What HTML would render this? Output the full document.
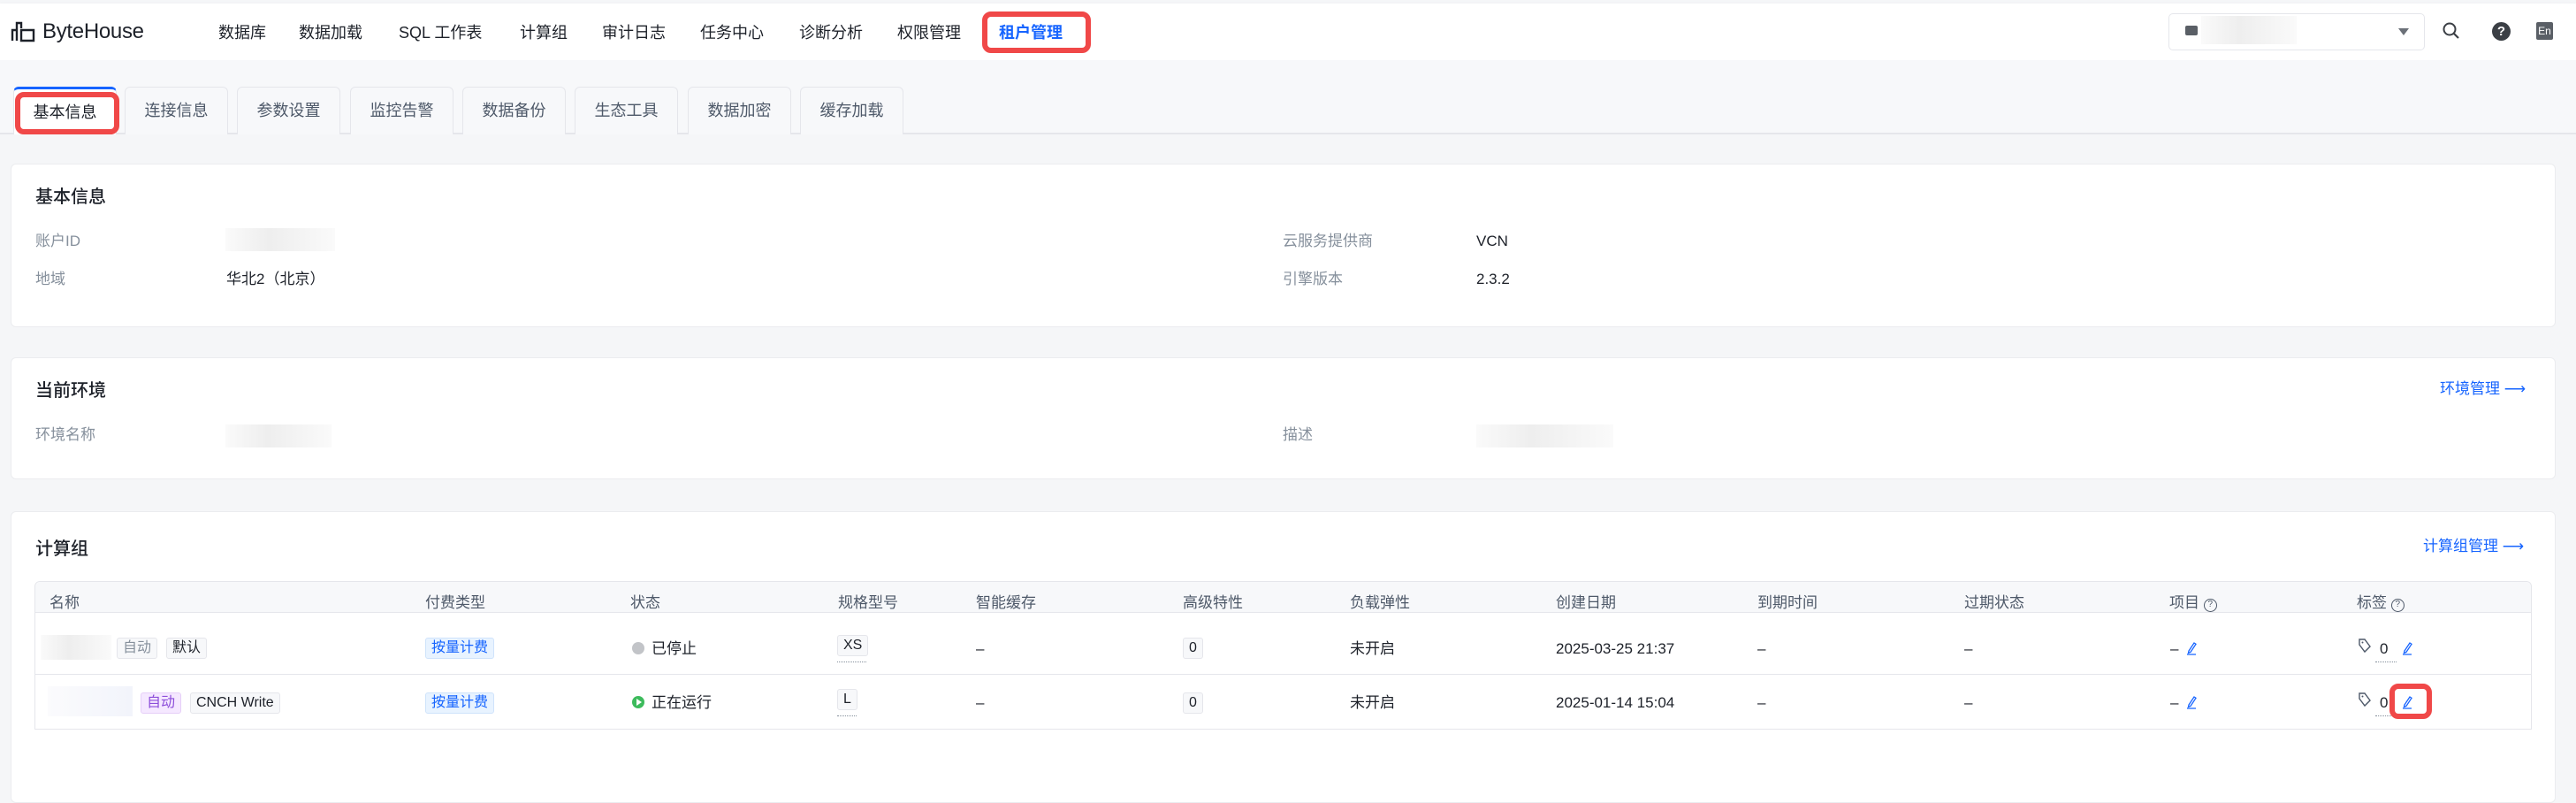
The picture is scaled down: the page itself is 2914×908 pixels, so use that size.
<!DOCTYPE html>
<html><head><meta charset="utf-8"><style>
*{margin:0;padding:0;box-sizing:border-box}
body{width:2914px;height:888px;overflow:hidden;background:#f5f6f8;font-family:"Liberation Sans","Noto Sans CJK SC",sans-serif;color:#1d2129;font-size:17px;position:relative;line-height:1.15}
.a{position:absolute;white-space:nowrap}
.nav{position:absolute;left:0;top:4px;width:2914px;height:64px;background:#fff;box-shadow:0 2px 6px rgba(0,0,0,.06)}
.ni{position:absolute;top:27px;font-size:18px;color:#1d2129}
.tabbar{position:absolute;left:0;top:68px;width:2914px;height:84px;background:#f7f8fa;border-bottom:2px solid #e5e6eb}
.tab{position:absolute;top:98px;height:54px;width:117px;border:1px solid #e5e6eb;border-bottom:none;border-radius:6px 6px 0 0;background:#f7f8fa;text-align:center;line-height:52px;font-size:18px;color:#4e5969}
.card{position:absolute;left:12px;width:2879px;background:#fff;border:1px solid #ebecef;border-radius:6px}
.ttl{font-size:20px;color:#1d2129;font-weight:500}
.lb{color:#86909c;font-size:17px}
.blur{position:absolute;background:linear-gradient(90deg,#fafafa,#eeeeee 40%,#fafafa)}
.rb{position:absolute;border:6px solid #f04848;border-radius:10px}
.th{position:absolute;top:672px;color:#4e5969;font-size:17px}
.tag{position:absolute;height:24px;line-height:22px;padding:0 6px;border:1px solid #e5e6eb;border-radius:3px;background:#f7f8fa;font-size:16px}
.link{color:#1664ff}
.pen{position:absolute;width:12px;height:18px}
</style></head><body>
<div class="nav"></div>
<svg class="a" style="left:12px;top:22px" width="30" height="26" viewBox="0 0 30 26"><path d="M2 24V12h5M7 24V4h5v6M12 24h14V12H12z" fill="none" stroke="#1d2129" stroke-width="2.4"/></svg>
<div class="a" style="left:48px;top:22px;font-size:24px;color:#1d2129;letter-spacing:-0.3px">ByteHouse</div>
<div class="ni" style="left:247px">数据库</div>
<div class="ni" style="left:338px">数据加载</div>
<div class="ni" style="left:451px">SQL 工作表</div>
<div class="ni" style="left:588px">计算组</div>
<div class="ni" style="left:681px">审计日志</div>
<div class="ni" style="left:792px">任务中心</div>
<div class="ni" style="left:904px">诊断分析</div>
<div class="ni" style="left:1015px">权限管理</div>
<div class="ni" style="left:1130px;color:#1664ff;font-weight:bold">租户管理</div>
<div class="rb" style="left:1111px;top:13px;width:123px;height:47px"></div>
<div class="a" style="left:2453px;top:15px;width:290px;height:42px;border:1px solid #e5e6eb;border-radius:5px;background:#fff"></div>
<div class="a" style="left:2472px;top:29px;width:14px;height:11px;background:#5a5f66;border-radius:2px"></div>
<div class="blur" style="left:2490px;top:18px;width:108px;height:32px"></div>
<svg class="a" style="left:2712px;top:31px" width="14" height="10"><path d="M1 1h12L7 9z" fill="#6b7078"/></svg>
<svg class="a" style="left:2762px;top:24px" width="22" height="22" viewBox="0 0 22 22"><circle cx="9" cy="9" r="6.5" fill="none" stroke="#3b3f45" stroke-width="2"/><path d="M14 14l5 5" stroke="#3b3f45" stroke-width="2.2"/></svg>
<div class="a" style="left:2819px;top:25px;width:21px;height:21px;border-radius:50%;background:#3b3f45;color:#fff;font-size:15px;font-weight:bold;text-align:center;line-height:21px">?</div>
<div class="a" style="left:2869px;top:25px;width:19px;height:20px;border-radius:2px;background:#5a5f66;color:#fff;font-size:12px;text-align:center;line-height:20px">En</div>

<div class="tabbar"></div>
<div class="tab" style="left:15px;background:#fff;color:#1d2129;border-top:3px solid #1664ff">基本信息</div>
<div class="tab" style="left:141px">连接信息</div>
<div class="tab" style="left:268px">参数设置</div>
<div class="tab" style="left:396px">监控告警</div>
<div class="tab" style="left:523px">数据备份</div>
<div class="tab" style="left:650px">生态工具</div>
<div class="tab" style="left:778px">数据加密</div>
<div class="tab" style="left:905px">缓存加载</div>
<div class="rb" style="left:17px;top:104px;width:118px;height:48px"></div>

<div class="card" style="top:185px;height:185px"></div>
<div class="a ttl" style="left:40px;top:212px">基本信息</div>
<div class="a lb" style="left:40px;top:263px">账户ID</div>
<div class="blur" style="left:255px;top:258px;width:124px;height:26px"></div>
<div class="a lb" style="left:40px;top:306px">地域</div>
<div class="a" style="left:256px;top:306px">华北2（北京）</div>
<div class="a lb" style="left:1451px;top:263px">云服务提供商</div>
<div class="a" style="left:1670px;top:263px">VCN</div>
<div class="a lb" style="left:1451px;top:306px">引擎版本</div>
<div class="a" style="left:1670px;top:306px">2.3.2</div>

<div class="card" style="top:404px;height:138px"></div>
<div class="a ttl" style="left:40px;top:431px">当前环境</div>
<div class="a lb" style="left:40px;top:482px">环境名称</div>
<div class="blur" style="left:255px;top:480px;width:120px;height:26px"></div>
<div class="a lb" style="left:1451px;top:482px">描述</div>
<div class="blur" style="left:1670px;top:480px;width:155px;height:26px"></div>
<div class="a link" style="left:2760px;top:430px">环境管理 ⟶</div>

<div class="card" style="top:578px;height:330px"></div>
<div class="a ttl" style="left:40px;top:610px">计算组</div>
<div class="a link" style="left:2741px;top:608px">计算组管理 ⟶</div>
<div class="a" style="left:39px;top:657px;width:2825px;height:168px;border:1px solid #e5e6eb;border-radius:6px 6px 0 0"></div>
<div class="a" style="left:40px;top:658px;width:2823px;height:35px;background:#f7f8fa;border-bottom:1px solid #e5e6eb;border-radius:6px 6px 0 0"></div>
<div class="a" style="left:40px;top:762px;width:2823px;height:1px;background:#e5e6eb"></div>
<div class="th" style="left:56px">名称</div>
<div class="th" style="left:481px">付费类型</div>
<div class="th" style="left:713px">状态</div>
<div class="th" style="left:948px">规格型号</div>
<div class="th" style="left:1104px">智能缓存</div>
<div class="th" style="left:1338px">高级特性</div>
<div class="th" style="left:1527px">负载弹性</div>
<div class="th" style="left:1760px">创建日期</div>
<div class="th" style="left:1988px">到期时间</div>
<div class="th" style="left:2222px">过期状态</div>
<div class="th" style="left:2454px">项目 <span style="display:inline-block;width:15px;height:15px;border:1.5px solid #4e5969;border-radius:50%;font-size:10px;line-height:12px;text-align:center;vertical-align:1px">?</span></div>
<div class="th" style="left:2666px">标签 <span style="display:inline-block;width:15px;height:15px;border:1.5px solid #4e5969;border-radius:50%;font-size:10px;line-height:12px;text-align:center;vertical-align:1px">?</span></div>

<!-- row1 -->
<div class="blur" style="left:46px;top:718px;width:80px;height:28px"></div>
<div class="tag" style="left:132px;top:721px;color:#86909c">自动</div>
<div class="tag" style="left:188px;top:721px">默认</div>
<div class="tag" style="left:481px;top:721px;background:#e8f3ff;border-color:#cfe3fb;color:#1664ff">按量计费</div>
<div class="a" style="left:715px;top:726px;width:14px;height:14px;border-radius:50%;background:#c2c4c8"></div>
<div class="a" style="left:737px;top:724px">已停止</div>
<div class="tag" style="left:947px;top:718px">XS</div>
<div class="a" style="left:947px;top:748px;width:33px;border-top:1px dotted #86909c"></div>
<div class="a" style="left:1104px;top:724px">–</div>
<div class="tag" style="left:1338px;top:721px">0</div>
<div class="a" style="left:1527px;top:724px">未开启</div>
<div class="a" style="left:1760px;top:724px">2025-03-25 21:37</div>
<div class="a" style="left:1988px;top:724px">–</div>
<div class="a" style="left:2222px;top:724px">–</div>
<div class="a" style="left:2455px;top:724px">–</div>
<!-- row2 -->
<div class="blur" style="left:54px;top:776px;width:96px;height:34px;background:linear-gradient(90deg,#fbfbfd,#f2f4fb)"></div>
<div class="tag" style="left:159px;top:783px;background:#f5e8ff;border-color:#e6cff8;color:#8d4eda">自动</div>
<div class="tag" style="left:215px;top:783px">CNCH Write</div>
<div class="tag" style="left:481px;top:783px;background:#e8f3ff;border-color:#cfe3fb;color:#1664ff">按量计费</div>
<div class="a" style="left:715px;top:787px;width:14px;height:14px;border-radius:50%;background:#3dbb5c"></div>
<svg class="a" style="left:719px;top:790px" width="8" height="8"><path d="M1 0l6 4-6 4z" fill="#fff"/></svg>
<div class="a" style="left:737px;top:785px">正在运行</div>
<div class="tag" style="left:947px;top:779px">L</div>
<div class="a" style="left:947px;top:809px;width:22px;border-top:1px dotted #86909c"></div>
<div class="a" style="left:1104px;top:785px">–</div>
<div class="tag" style="left:1338px;top:783px">0</div>
<div class="a" style="left:1527px;top:785px">未开启</div>
<div class="a" style="left:1760px;top:785px">2025-01-14 15:04</div>
<div class="a" style="left:1988px;top:785px">–</div>
<div class="a" style="left:2222px;top:785px">–</div>
<div class="a" style="left:2455px;top:785px">–</div>
<svg class="pen" style="left:2473px;top:724px" viewBox="0 0 12 18"><path d="M3 12l6-9 2 1.3-6 9-2.5 1z M1 16h10" fill="none" stroke="#1664ff" stroke-width="1.3"/></svg>
<svg class="pen" style="left:2473px;top:785px" viewBox="0 0 12 18"><path d="M3 12l6-9 2 1.3-6 9-2.5 1z M1 16h10" fill="none" stroke="#1664ff" stroke-width="1.3"/></svg>
<svg class="a" style="left:2667px;top:721px" width="16" height="18" viewBox="0 0 16 18"><path d="M2 2h6l6 8-6 6-6-8z" fill="none" stroke="#4e5969" stroke-width="1.4"/><circle cx="5.5" cy="5.5" r="1" fill="#4e5969"/></svg>
<div class="a" style="left:2692px;top:724px">0</div>
<div class="a" style="left:2687px;top:748px;width:24px;border-top:1px dotted #86909c"></div>
<svg class="pen" style="left:2717px;top:724px" viewBox="0 0 12 18"><path d="M3 12l6-9 2 1.3-6 9-2.5 1z M1 16h10" fill="none" stroke="#1664ff" stroke-width="1.3"/></svg>
<svg class="a" style="left:2667px;top:782px" width="16" height="18" viewBox="0 0 16 18"><path d="M2 2h6l6 8-6 6-6-8z" fill="none" stroke="#4e5969" stroke-width="1.4"/><circle cx="5.5" cy="5.5" r="1" fill="#4e5969"/></svg>
<div class="a" style="left:2692px;top:785px">0</div>
<div class="a" style="left:2687px;top:809px;width:24px;border-top:1px dotted #86909c"></div>
<svg class="pen" style="left:2717px;top:785px" viewBox="0 0 12 18"><path d="M3 12l6-9 2 1.3-6 9-2.5 1z M1 16h10" fill="none" stroke="#1664ff" stroke-width="1.3"/></svg>
<div class="rb" style="left:2703px;top:773px;width:48px;height:40px"></div>
</body></html>
